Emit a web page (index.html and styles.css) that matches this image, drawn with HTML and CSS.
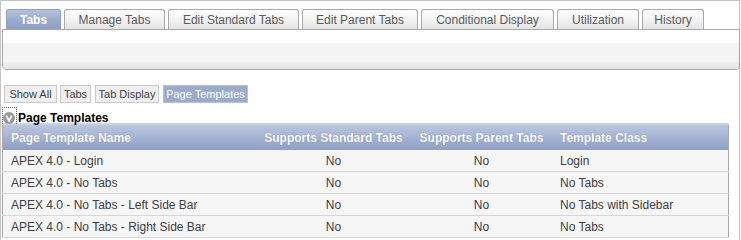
FILE: index.html
```html
<!DOCTYPE html>
<html>
<head>
<meta charset="utf-8">
<link rel="stylesheet" href="styles.css">
</head>
<body>
<div class="page">
  <div class="tabs">
    <span class="tab current">Tabs</span>
    <span class="tab">Manage Tabs</span>
    <span class="tab">Edit Standard Tabs</span>
    <span class="tab">Edit Parent Tabs</span>
    <span class="tab">Conditional Display</span>
    <span class="tab">Utilization</span>
    <span class="tab">History</span>
  </div>
  <div class="panel">
    <div class="panel-top"></div>
    <div class="panel-mid"></div>
    <div class="panel-bot"></div>
  </div>
  <div class="filters">
    <span class="btn">Show All</span>
    <span class="btn">Tabs</span>
    <span class="btn">Tab Display</span>
    <span class="btn on">Page Templates</span>
  </div>
  <div class="region-title">
    <span class="toggle"><svg width="12" height="12" viewBox="0 0 12 12"><circle cx="6" cy="6" r="6" fill="#9a9a9a"/><path d="M3.3 3.6 L6 8.6 L8.7 3.6" fill="none" stroke="#fff" stroke-width="1.7"/></svg></span>
    <span class="title">Page Templates</span>
  </div>
  <table class="report">
    <thead>
      <tr>
        <th class="c1">Page Template Name</th>
        <th class="c2">Supports Standard Tabs</th>
        <th class="c3">Supports Parent Tabs</th>
        <th class="c4">Template Class</th>
      </tr>
    </thead>
    <tbody>
      <tr><td class="c1">APEX 4.0 - Login</td><td class="c2">No</td><td class="c3">No</td><td class="c4">Login</td></tr>
      <tr><td class="c1">APEX 4.0 - No Tabs</td><td class="c2">No</td><td class="c3">No</td><td class="c4">No Tabs</td></tr>
      <tr><td class="c1">APEX 4.0 - No Tabs - Left Side Bar</td><td class="c2">No</td><td class="c3">No</td><td class="c4">No Tabs with Sidebar</td></tr>
      <tr><td class="c1">APEX 4.0 - No Tabs - Right Side Bar</td><td class="c2">No</td><td class="c3">No</td><td class="c4">No Tabs</td></tr>
    </tbody>
  </table>
</div>
</body>
</html>
```
FILE: styles.css
```css
html, body {
  margin: 0;
  padding: 0;
  background: #fff;
  font-family: "Liberation Sans", Arial, sans-serif;
  font-size: 12px;
  color: #404040;
}
.page {
  width: 740px;
  height: 260px;
  box-sizing: border-box;
  border: 1px solid #c4c4c4;
  border-bottom: none;
}
.tabs {
  display: flex;
  gap: 3px;
  padding: 8px 0 0 5px;
  height: 20px;
}
.tab {
  display: flex;
  align-items: center;
  justify-content: center;
  flex-shrink: 0;
  white-space: nowrap;
  box-sizing: border-box;
  height: 20px;
  padding: 0;
  border: 1px solid #a9a9a9;
  border-bottom: none;
  border-radius: 3px 3px 0 0;
  background: linear-gradient(#ffffff, #f2f2f2 55%, #e4e4e4);
  color: #5a5a5a;
  font-size: 12px;
}
.tab.current {
  width: 55px;
  background: linear-gradient(#b3c1dd, #98a9cb 60%, #8d9fc5);
  border-color: #8e9fc3;
  color: #fff;
  font-weight: bold;
}
.tab:nth-child(2) { width: 101px; }
.tab:nth-child(3) { width: 131px; }
.tab:nth-child(4) { width: 116px; }
.tab:nth-child(5) { width: 133px; }
.tab:nth-child(6) { width: 82px; }
.tab:nth-child(7) { width: 62px; }
.panel {
  margin: 0 -1px 0 1px;
  height: 41px;
  box-sizing: border-box;
  border: 1px solid #a8a8a8;
  border-radius: 0 0 4px 4px;
  display: flex;
  flex-direction: column;
  overflow: hidden;
}
.panel-top { height: 13px; background: #fff; }
.panel-mid { height: 19px; background: #f4f4f4; }
.panel-bot { flex: 1; background: linear-gradient(#eeeeee, #e4e4e4); }
.filters {
  display: flex;
  gap: 3px;
  padding: 15px 0 0 3px;
  height: 18px;
}
.btn {
  display: flex;
  align-items: center;
  justify-content: center;
  flex-shrink: 0;
  white-space: nowrap;
  box-sizing: border-box;
  height: 18px;
  padding: 0;
  border: 1px solid #cacaca;
  background: #efefef;
  color: #404040;
  font-size: 11px;
}
.btn:nth-child(1) { width: 53px; }
.btn:nth-child(2) { width: 31px; }
.btn:nth-child(3) { width: 64px; margin-left: 1px; }
.btn:nth-child(4) { width: 85px; margin-left: 1px; }
.btn.on {
  background: #9aabcd;
  border-color: #b3c1dc;
  color: #fff;
}
.region-title {
  display: flex;
  align-items: flex-end;
  height: 18px;
  padding-left: 1px;
  margin-top: 2px;
}
.toggle {
  display: flex;
  align-items: flex-end;
  box-sizing: border-box;
  width: 15px;
  height: 17px;
  border: 1px dotted #606060;
  border-bottom: none;
  padding: 0;
  margin-bottom: -1px;
}
.title {
  font-weight: bold;
  color: #000;
  font-size: 12px;
  line-height: 14px;
  margin-left: 1px;
  margin-bottom: -2px;
}
.report {
  margin-left: 1px;
  width: 727px;
  border-collapse: collapse;
  border: 1px solid #a8a8a8;
  table-layout: fixed;
}
.report th {
  height: 24px;
  padding: 1px 8px 0;
  background: linear-gradient(#b9c6df, #a6b5d3 45%, #8d9fc5);
  color: #fff;
  font-weight: bold;
  font-size: 12px;
  text-shadow: 0 0 1px rgba(80, 95, 130, 0.6);
  border-top: 2px solid #c9d3e6;
}
.report td {
  height: 20px;
  padding: 1px 8px 0;
  background: #f6f6f6;
  border-bottom: 1px solid #d6d6d6;
  color: #404040;
  font-size: 12px;
}
.c1 { width: 237px; text-align: left; }
.c2 { width: 139px; text-align: center; }
.c3 { width: 125px; text-align: center; }
.c4 { text-align: left; }
```
